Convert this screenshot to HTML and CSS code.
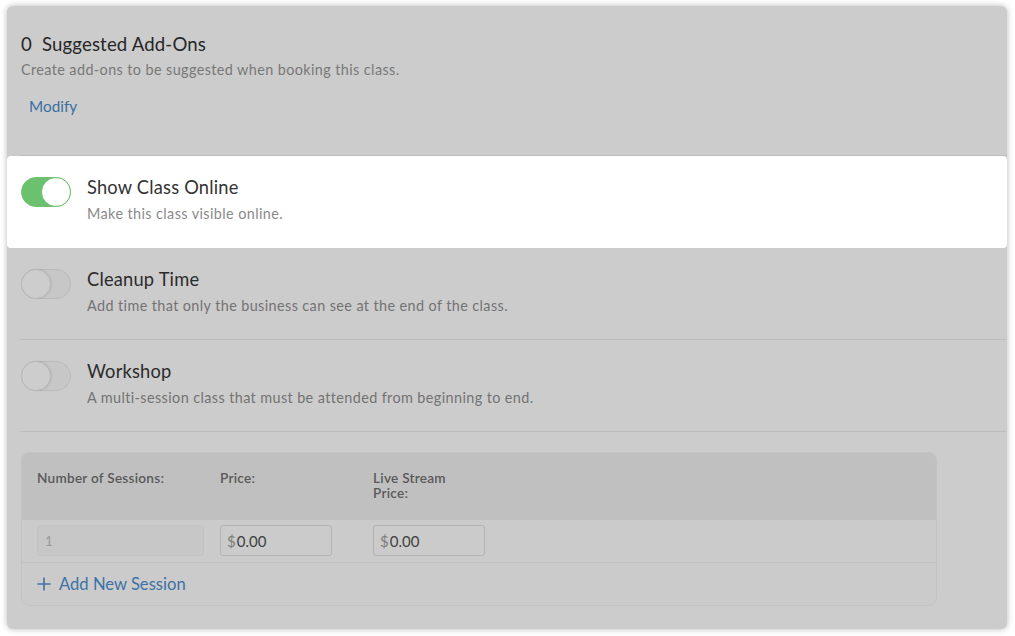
FILE: index.html
```html
<!DOCTYPE html>
<html>
<head>
<meta charset="utf-8">
<link rel="stylesheet" href="styles.css">
</head>
<body>
<div class="card">
  <div class="addons">
    <div class="addons-title"><span class="count">0</span>Suggested Add-Ons</div>
    <div class="desc">Create add-ons to be suggested when booking this class.</div>
    <a class="link modify">Modify</a>
  </div>
  <div class="opt opt-active">
    <span class="toggle on"><span class="knob"></span></span>
    <div class="opt-text">
      <div class="opt-title">Show Class Online</div>
      <div class="opt-desc">Make this class visible online.</div>
    </div>
  </div>
  <div class="opt">
    <span class="toggle"><span class="knob"></span></span>
    <div class="opt-text">
      <div class="opt-title">Cleanup Time</div>
      <div class="opt-desc">Add time that only the business can see at the end of the class.</div>
    </div>
  </div>
  <div class="opt">
    <span class="toggle"><span class="knob"></span></span>
    <div class="opt-text">
      <div class="opt-title">Workshop</div>
      <div class="opt-desc">A multi-session class that must be attended from beginning to end.</div>
    </div>
  </div>
  <div class="sessions">
    <div class="s-head s-grid">
      <div class="s-label">Number of Sessions:</div>
      <div class="s-label">Price:</div>
      <div class="s-label">Live Stream<br>Price:</div>
    </div>
    <div class="s-row s-grid">
      <div class="field field-disabled w1"><span class="val-dis">1</span></div>
      <div class="field w2"><span class="cur">$</span><span class="val">0.00</span></div>
      <div class="field w2"><span class="cur">$</span><span class="val">0.00</span></div>
    </div>
    <div class="s-add">
      <svg class="plus" width="14" height="14" viewBox="0 0 14 14"><path d="M7 0.5V13.5M0.5 7H13.5" stroke="#3d72a6" stroke-width="1.6" fill="none"/></svg>
      <span class="link add-text">Add New Session</span>
    </div>
  </div>
</div>
</body>
</html>
```

FILE: styles.css
```css
* { box-sizing: border-box; }
html, body { margin: 0; padding: 0; background: #ffffff; }
body {
  font-family: Lato, "Open Sans", "Liberation Sans", sans-serif;
  padding: 6px 8px 7px 7px;
}
.card {
  width: 1000px;
  height: 623px;
  background: #cccccc;
  border-radius: 6px;
  box-shadow: 0 0 6px rgba(0,0,0,0.28);
  overflow: hidden;
}
.addons {
  padding: 27px 14px 39px 1px;
  margin-left: 13px;
  border-bottom: 1px solid #bdbdbd;
}
.addons-title {
  font-size: 18.6px;
  line-height: 22px;
  letter-spacing: 0.15px;
  color: #262626;
}
.count { margin-right: 10px; }
.desc {
  margin-top: 5px;
  font-size: 14.4px;
  line-height: 20px;
  letter-spacing: 0.4px;
  color: #787878;
}
.link { color: #3b6fa2; }
.modify {
  display: block;
  margin: 16px 0 0 8px;
  font-size: 15.3px;
  line-height: 20px;
}
.opt {
  display: flex;
  gap: 16px;
  margin-left: 13px;
  padding: 20px 0 23px 1px;
  border-bottom: 1px solid #bdbdbd;
}
.opt-active {
  margin-left: 0;
  padding-left: 14px;
  background: #ffffff;
  border-radius: 4px;
  border-bottom-color: #ffffff;
}
.toggle {
  flex: none;
  width: 50px;
  height: 30px;
  margin-top: 1px;
  border-radius: 15px;
  background: #c7c7c7;
  border: 1px solid #bababa;
  position: relative;
}
.toggle .knob {
  position: absolute;
  top: -1px;
  left: -1px;
  width: 30px;
  height: 30px;
  border-radius: 50%;
  background: #cdcdcd;
  border: 1px solid #b8b8b8;
  box-shadow: 1px 0 2px rgba(0,0,0,0.08);
}
.toggle.on {
  background: #6cc16f;
  border-color: #6cc16f;
}
.toggle.on .knob {
  left: auto;
  right: -1px;
  background: #ffffff;
  border-color: #6cc16f;
  box-shadow: none;
}
.opt-title {
  font-size: 18.3px;
  line-height: 22px;
  letter-spacing: 0.2px;
  color: #2b2b2b;
}
.opt-active .opt-title { color: #333333; }
.opt-desc {
  margin-top: 6px;
  font-size: 14.4px;
  line-height: 20px;
  letter-spacing: 0.4px;
  color: #737373;
}
.opt-active .opt-desc { color: #8a8a8a; }
.sessions {
  margin: 20px 0 0 14px;
  width: 916px;
  border: 1px solid #c3c3c3;
  border-radius: 8px;
  overflow: hidden;
  background: #cbcbcb;
}
.s-grid {
  display: grid;
  grid-template-columns: 183px 153px 1fr;
  padding: 0 15px;
}
.s-head {
  background: #c0c0c0;
  height: 67px;
  padding-top: 18px;
}
.s-label {
  font-size: 13.6px;
  line-height: 15px;
  letter-spacing: 0.25px;
  color: #595959;
  font-weight: 600;
}
.s-row {
  padding-top: 5px;
  padding-bottom: 6px;
  border-bottom: 1px solid #c1c1c1;
}
.field {
  height: 31px;
  border: 1px solid #b3b3b3;
  border-radius: 3px;
  background: #cbcbcb;
  display: flex;
  align-items: center;
  padding-left: 6px;
  font-size: 15px;
}
.w1 { width: 167px; border-color: #c2c2c2; background: #c7c7c7; padding-left: 7px; }
.w2 { width: 112px; }
.val-dis { color: #999999; font-size: 13.5px; }
.cur { color: #7d7d7d; margin-right: 1px; }
.val { color: #3f3f3f; }
.s-add {
  height: 42px;
  display: flex;
  align-items: center;
  padding-left: 15px;
  gap: 8px;
}
.add-text {
  font-size: 16.6px;
  color: #3d72a6;
}
```
